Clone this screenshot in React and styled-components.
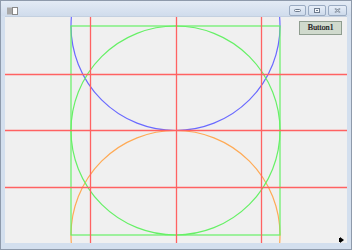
import React from "react";
import styled, { createGlobalStyle } from "styled-components";

const Global = createGlobalStyle`
  html, body { margin: 0; padding: 0; background: #ffffff; }
  body { font-family: "Liberation Sans", Arial, sans-serif; }
`;

const Window = styled.div`
  width: 352px;
  height: 250px;
  box-sizing: border-box;
  border: 1px solid #8e9aab;
  background: #d3dfee;
  display: flex;
  flex-direction: column;
  padding: 0 4px 6px 4px;
`;

const TitleBar = styled.div`
  height: 15px;
  margin: 0 -4px;
  padding: 0 4px 0 6px;
  background: linear-gradient(#e3ebf5, #d0dcec);
  display: flex;
  align-items: flex-start;
  gap: 2px;
`;

const TitleIcon = styled.svg`
  width: 11px;
  height: 8px;
  margin-top: 6px;
`;

const Spacer = styled.div`
  flex: 1;
`;

const CaptionButton = styled.div`
  width: ${(p) => p.$w}px;
  height: 11px;
  margin-top: 4px;
  box-sizing: border-box;
  border: 1px solid #9aabc2;
  border-radius: 2px;
  background: linear-gradient(#e6eef8, #ccd9ea);
  display: flex;
  align-items: center;
  justify-content: center;
`;

const Client = styled.div`
  flex: 1;
  position: relative;
  background: #f0f0f0;
  border-top: 1px solid #c3d0e0;
  display: flex;
  justify-content: flex-end;
  align-items: flex-start;
  padding: 4px 5px 0 0;
  overflow: hidden;
`;

const Canvas = styled.svg`
  position: absolute;
  left: 0;
  top: 0;
  width: 342px;
  height: 226px;
`;

const Button = styled.button`
  position: relative;
  width: 43px;
  height: 14px;
  padding: 0;
  margin: 0;
  box-sizing: border-box;
  border: 1px solid #8f9d8f;
  background: #d0dacd;
  color: #2a2a2a;
  font-family: "Liberation Serif", "Times New Roman", serif;
  font-size: 8px;
  line-height: 12px;
  font-weight: normal;
  text-shadow: 0.3px 0 0 #2a2a2a;
`;

const Grip = styled.svg`
  position: absolute;
  right: 3px;
  bottom: 0px;
  width: 5px;
  height: 6px;
`;

const W = 342;
const H = 226;
const cx = 170.5;
const r = 104.5;

export default function App() {
  const red = "#ff6262";
  const green = "#66f066";
  return (
    <>
      <Global />
      <Window>
        <TitleBar>
          <TitleIcon viewBox="0 0 11 8">
            <rect x="0" y="0.5" width="5" height="7" fill="#a9a9a9" />
            <rect x="5.5" y="0.5" width="5" height="7" fill="#ffffff" stroke="#8a8a8a" strokeWidth="1" />
          </TitleIcon>
          <Spacer />
          <CaptionButton $w={17}>
            <svg width="7" height="3" viewBox="0 0 7 3">
              <rect x="0.5" y="0.5" width="6" height="2" rx="1" fill="#f4f7fb" stroke="#6d7b8d" strokeWidth="1" />
            </svg>
          </CaptionButton>
          <CaptionButton $w={18}>
            <svg width="6" height="5" viewBox="0 0 6 5">
              <rect x="0.5" y="0.5" width="5" height="4" fill="#f4f7fb" stroke="#6d7b8d" strokeWidth="1" />
              <rect x="2" y="2" width="2" height="1" fill="#6d7b8d" />
            </svg>
          </CaptionButton>
          <CaptionButton $w={19}>
            <svg width="7" height="5" viewBox="0 0 7 5">
              <path d="M1 0.5 L6 4.5 M6 0.5 L1 4.5" stroke="#6d7b8d" strokeWidth="1.6" />
              <path d="M1 0.5 L6 4.5 M6 0.5 L1 4.5" stroke="#f4f7fb" strokeWidth="0.5" />
            </svg>
          </CaptionButton>
        </TitleBar>
        <Client>
          <Canvas viewBox={`0 0 ${W} ${H}`}>
            <circle cx={cx} cy={218} r={r} fill="none" stroke="#ffaa55" strokeWidth="1.2" />
            <circle cx={cx} cy={9} r={r} fill="none" stroke="#6a6aff" strokeWidth="1.2" />
            <rect x={66} y={9} width={209} height={209} fill="none" stroke={green} strokeWidth="1.2" />
            <circle cx={cx} cy={113.5} r={r} fill="none" stroke={green} strokeWidth="1.2" />
            {[85.5, 171.5, 256.5].map((x) => (
              <line key={"v" + x} x1={x} y1={0} x2={x} y2={H} stroke={red} strokeWidth="1.3" />
            ))}
            {[57.5, 113.5, 170.5].map((y) => (
              <line key={"h" + y} x1={0} y1={y} x2={W} y2={y} stroke={red} strokeWidth="1.3" />
            ))}
          </Canvas>
          <Button>Button1</Button>
          <Grip viewBox="0 0 5 6">
            <rect x="0" y="1" width="1" height="4" fill="#000" />
            <path d="M1 0 L5 3 L1 6 Z" fill="#000" />
          </Grip>
        </Client>
      </Window>
    </>
  );
}
